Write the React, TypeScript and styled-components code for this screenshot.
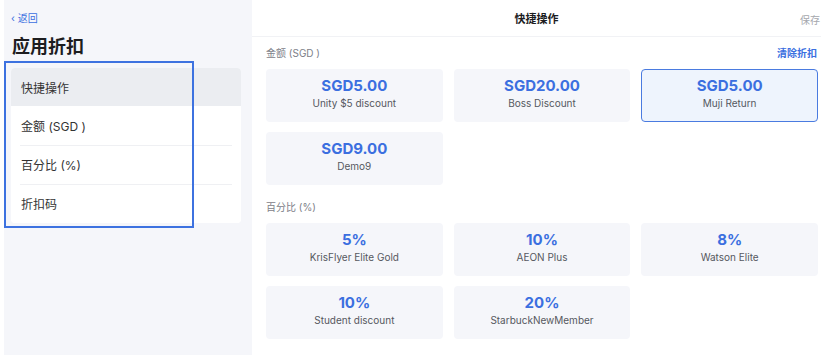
import React from 'react'
import styled, { createGlobalStyle } from 'styled-components'

const GlobalStyle = createGlobalStyle`
  body {
    margin: 0;
    background: #fff;
    font-family: Inter, "Noto Sans CJK SC", sans-serif;
    -webkit-font-smoothing: antialiased;
  }
`

interface Discount {
  value: string
  name: string
  selected?: boolean
}

const amountDiscounts: Discount[] = [
  { value: 'SGD5.00', name: 'Unity $5 discount' },
  { value: 'SGD20.00', name: 'Boss Discount' },
  { value: 'SGD5.00', name: 'Muji Return', selected: true },
  { value: 'SGD9.00', name: 'Demo9' },
]

const percentDiscounts: Discount[] = [
  { value: '5%', name: 'KrisFlyer Elite Gold' },
  { value: '10%', name: 'AEON Plus' },
  { value: '8%', name: 'Watson Elite' },
  { value: '10%', name: 'Student discount' },
  { value: '20%', name: 'StarbuckNewMember' },
]

const menu = ['快捷操作', '金额 (SGD )', '百分比 (%)', '折扣码']

const App: React.FC = () => {
  return (
    <>
      <GlobalStyle />
      <Page>
        <Sidebar>
          <BackLink>‹ 返回</BackLink>
          <Title>应用折扣</Title>
          <Menu>
            {menu.map((label, i) => (
              <MenuItem key={label} active={i === 0} divider={i > 1}>
                {label}
              </MenuItem>
            ))}
          </Menu>
        </Sidebar>

        <Main>
          <Header>
            <HeaderTitle>快捷操作</HeaderTitle>
            <SaveButton>保存</SaveButton>
          </Header>

          <Content>
            <SectionHead>
              <SectionLabel>金额 (SGD )</SectionLabel>
              <ClearLink>清除折扣</ClearLink>
            </SectionHead>
            <CardGrid>
              {amountDiscounts.map((d, i) => (
                <Card key={i} selected={!!d.selected}>
                  <CardValue>{d.value}</CardValue>
                  <CardName>{d.name}</CardName>
                </Card>
              ))}
            </CardGrid>

            <SectionHead>
              <SectionLabel>百分比 (%)</SectionLabel>
            </SectionHead>
            <CardGrid>
              {percentDiscounts.map((d, i) => (
                <Card key={i} selected={!!d.selected}>
                  <CardValue>{d.value}</CardValue>
                  <CardName>{d.name}</CardName>
                </Card>
              ))}
            </CardGrid>
          </Content>
        </Main>

        <Highlight />
      </Page>
    </>
  )
}

export default App

const Page = styled.div`
  position: relative;
  display: flex;
  height: 355px;
  padding-left: 4px;
  overflow: hidden;
`

const Sidebar = styled.aside`
  width: 248px;
  flex-shrink: 0;
  background: #f5f6fa;
  padding: 11px 11px 0 7px;
  box-sizing: border-box;
`

const BackLink = styled.div`
  font-size: 10px;
  line-height: 14px;
  color: #3b6fe0;
`

const Title = styled.h1`
  margin: 9px 0 0 1px;
  font-size: 18px;
  line-height: 26px;
  font-weight: 700;
  color: #1d1d1f;
`

const Menu = styled.div`
  margin-top: 8px;
  background: #fff;
  border-radius: 4px;
  overflow: hidden;
`

const MenuItem = styled.div<{ active: boolean; divider: boolean }>`
  position: relative;
  height: ${(p) => (p.active ? '38px' : '39px')};
  display: flex;
  align-items: center;
  padding-left: 10px;
  font-size: 12px;
  color: #333;
  background: ${(p) => (p.active ? '#ebedf1' : '#fff')};

  ${(p) =>
    p.divider &&
    `
    &::before {
      content: '';
      position: absolute;
      top: 0;
      left: 9px;
      right: 9px;
      height: 1px;
      background: #eff0f3;
    }
  `}
`

const Main = styled.main`
  flex: 1;
  display: flex;
  flex-direction: column;
  background: #fff;
`

const Header = styled.header`
  position: relative;
  height: 36px;
  display: flex;
  align-items: center;
  justify-content: center;
  border-bottom: 1px solid #f1f2f5;
`

const HeaderTitle = styled.div`
  font-size: 11px;
  font-weight: 600;
  color: #1d1d1f;
`

const SaveButton = styled.div`
  position: absolute;
  right: 1px;
  top: 12px;
  font-size: 10px;
  color: #a5a7ad;
`

const Content = styled.div`
  padding: 0 3px 0 14px;
`

const SectionHead = styled.div`
  display: flex;
  justify-content: space-between;
  align-items: center;
  height: 14px;
  margin: 8px 0 10px;
  &:not(:first-child) {
    margin-top: 14px;
  }
`

const SectionLabel = styled.div`
  font-size: 10px;
  color: #7d8088;
`

const ClearLink = styled.div`
  font-size: 10px;
  font-weight: 600;
  color: #3b6fe0;
  margin-right: 1px;
`

const CardGrid = styled.div`
  display: grid;
  grid-template-columns: repeat(3, 1fr);
  column-gap: 11px;
  row-gap: 10px;
`

const Card = styled.div<{ selected: boolean }>`
  height: 53px;
  box-sizing: border-box;
  padding-bottom: 4px;
  border-radius: 4px;
  background: ${(p) => (p.selected ? '#eef4fd' : '#f5f6fa')};
  border: 1px solid ${(p) => (p.selected ? '#4a7be0' : 'transparent')};
  display: flex;
  flex-direction: column;
  align-items: center;
  justify-content: center;
  gap: 2px;
`

const CardValue = styled.div`
  font-size: 15px;
  font-weight: 700;
  line-height: 18px;
  color: #3b6fe0;
`

const CardName = styled.div`
  font-size: 10px;
  line-height: 13px;
  color: #555860;
`

const Highlight = styled.div`
  position: absolute;
  left: 4px;
  top: 61px;
  width: 190px;
  height: 167px;
  box-sizing: border-box;
  border: 2px solid #3d72e0;
  pointer-events: none;
`
